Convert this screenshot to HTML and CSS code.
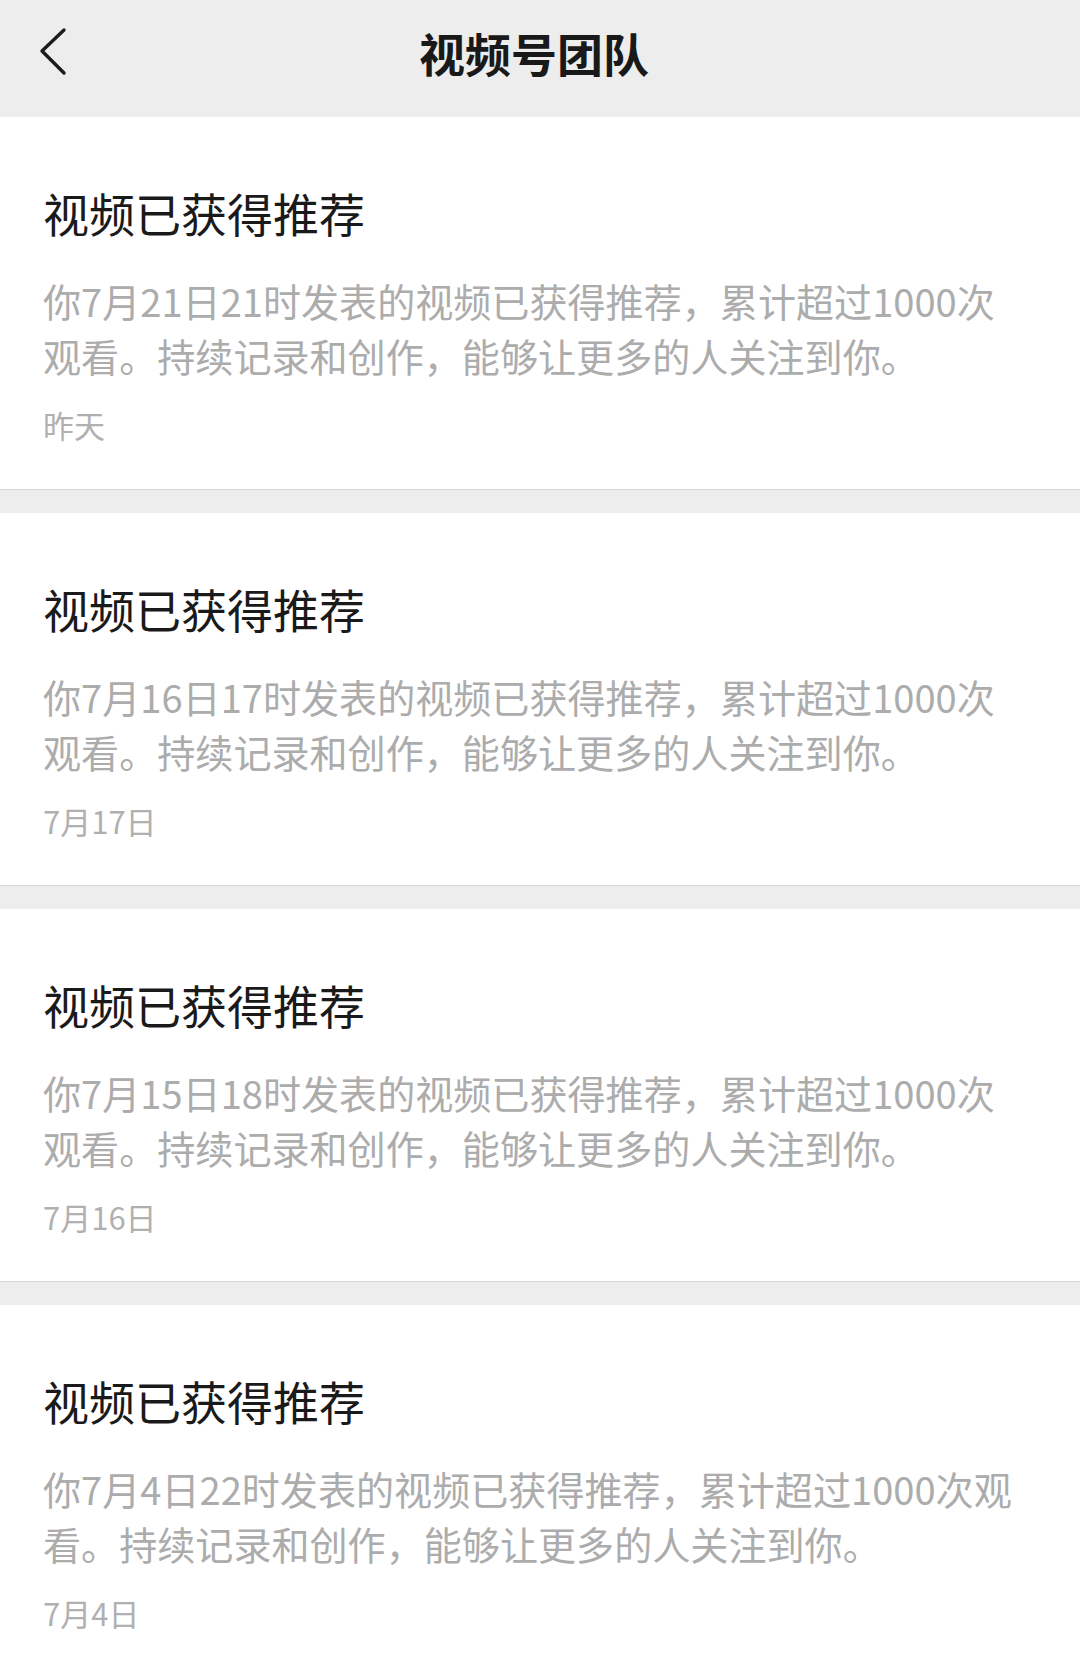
FILE: index.html
```html
<!DOCTYPE html>
<html lang="zh-CN">
<head>
    <meta charset="UTF-8">
    <title>视频号团队</title>
    <link rel="stylesheet" href="styles.css">
</head>
<body>

    <header class="nav-bar">
        <button type="button" class="btn-back" aria-label="返回">
            <svg width="30" height="50" viewBox="0 0 30 50">
                <polyline points="26,3 4,24 26,46" fill="none" stroke="#1c1c1c" stroke-width="3.4" stroke-linecap="round" stroke-linejoin="round"/>
            </svg>
        </button>
        <h1 class="nav-title">视频号团队</h1>
        <span></span>
    </header>

    <main class="msg-list">
        <section class="msg-card">
            <h2 class="msg-title">视频已获得推荐</h2>
            <p class="msg-body">你7月21日21时发表的视频已获得推荐，累计超过1000次观看。持续记录和创作，能够让更多的人关注到你。</p>
            <div class="msg-time">昨天</div>
        </section>

        <section class="msg-card">
            <h2 class="msg-title">视频已获得推荐</h2>
            <p class="msg-body">你7月16日17时发表的视频已获得推荐，累计超过1000次观看。持续记录和创作，能够让更多的人关注到你。</p>
            <div class="msg-time">7月17日</div>
        </section>

        <section class="msg-card">
            <h2 class="msg-title">视频已获得推荐</h2>
            <p class="msg-body">你7月15日18时发表的视频已获得推荐，累计超过1000次观看。持续记录和创作，能够让更多的人关注到你。</p>
            <div class="msg-time">7月16日</div>
        </section>

        <section class="msg-card">
            <h2 class="msg-title">视频已获得推荐</h2>
            <p class="msg-body">你7月4日22时发表的视频已获得推荐，累计超过1000次观看。持续记录和创作，能够让更多的人关注到你。</p>
            <div class="msg-time">7月4日</div>
        </section>
    </main>

</body>
</html>
```

FILE: styles.css
```css
body {
    margin: 0;
    font-family: "Noto Sans CJK SC", "Noto Sans", sans-serif;
    background-color: #ededed;
}

.nav-bar {
    display: grid;
    grid-template-columns: 1fr auto 1fr;
    align-items: center;
    height: 117px;
    padding: 0 0 14px 0;
    box-sizing: border-box;
    background-color: #ededed;
}

.btn-back {
    justify-self: start;
    display: flex;
    margin-left: 38px;
    padding: 0;
    border: none;
    background: none;
}

.nav-title {
    margin: 0 12px 0 0;
    font-size: 46px;
    font-weight: 700;
    color: #191919;
}

.msg-list {
    display: flex;
    flex-direction: column;
    gap: 23px;
}

.msg-card {
    background-color: #fff;
    border-bottom: 1px solid #d6d6d6;
    height: 373px;
    box-sizing: border-box;
    padding: 65px 50px 0 43px;
}

.msg-title {
    margin: 0;
    font-size: 46px;
    line-height: 60px;
    font-weight: 400;
    color: #1a1a1a;
}

.msg-body {
    margin: 31px 0 0;
    font-size: 38.1px;
    line-height: 55px;
    color: #acacac;
}

.msg-time {
    margin-top: 22px;
    font-size: 31px;
    line-height: 40px;
    color: #b0b0b0;
}
```
